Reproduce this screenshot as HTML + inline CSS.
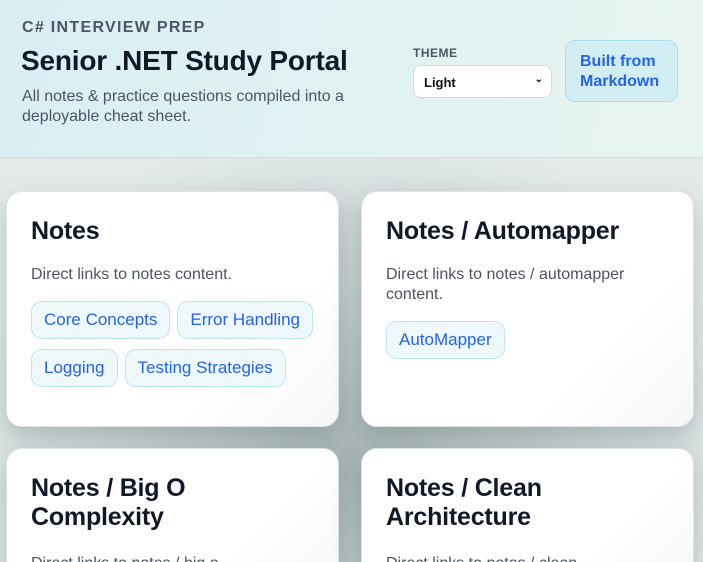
<!DOCTYPE html>
<html><head><style>
*{box-sizing:border-box;margin:0;padding:0}
html,body{width:703px;height:562px;overflow:hidden}
body{font-family:"Liberation Sans",sans-serif;background:#dfe5e5;position:relative}
.hdr{position:absolute;left:0;top:0;width:703px;height:158px;background:linear-gradient(100deg,#d9eff3,#e3f2f1 70%,#e8f4f0);border-bottom:1px solid #cfe0e6}
.kick{position:absolute;left:22px;top:19px;font-size:16px;font-weight:bold;letter-spacing:1.3px;color:#4b5563}
.title{position:absolute;left:21px;top:45px;font-size:28px;font-weight:bold;color:#111827;letter-spacing:-0.2px}
.sub{position:absolute;left:22px;top:87px;font-size:16px;line-height:20px;color:#4b5563;width:360px}
.tl{position:absolute;left:413px;top:46px;font-size:12px;font-weight:bold;color:#4b5563;letter-spacing:.5px}
.sel{position:absolute;left:413px;top:65px;width:139px;height:33px;background:#fff;border:1px solid #d1dde5;border-radius:8px;font-size:13px;font-weight:bold;color:#111;padding:9px 0 0 10px}
.sel span{position:absolute;right:8px;top:8px;font-size:10px}
.btn{position:absolute;left:565px;top:40px;width:113px;height:62px;background:#d3eef2;border:1px solid #a8ddef;border-radius:10px;color:#2563eb;font-weight:bold;font-size:16px;line-height:20px;padding:11px 0 0 14px}
.bg{position:absolute;left:0;top:159px;width:703px;height:403px;background:radial-gradient(ellipse at 50% 75%,#a9b5b6,#c6d0d1 40%,#e4eaea 80%)}
.card{position:absolute;width:333px;background:linear-gradient(135deg,#fff 70%,#f4f6f7);border:1px solid #dde4e8;border-radius:16px;box-shadow:0 10px 25px rgba(80,100,100,.3)}
.card h2{position:absolute;left:24px;top:25px;font-size:25px;font-weight:bold;color:#111827;line-height:29px;letter-spacing:-0.2px}
.card p{position:absolute;left:24px;font-size:16px;line-height:20px;color:#4b5563;width:275px}
.chips{position:absolute;left:24px;width:305px}
.chip{display:inline-block;height:38px;padding:0 12px;line-height:36px;border:1px solid #bde5f4;background:#eef8fd;border-radius:11px;color:#2563eb;font-size:17px;margin:0 7px 10px 0}
</style></head><body>
<div class="hdr">
<div class="kick">C# INTERVIEW PREP</div>
<div class="title">Senior .NET Study Portal</div>
<div class="sub">All notes &amp; practice questions compiled into a deployable cheat sheet.</div>
<div class="tl">THEME</div>
<div class="sel">Light<span>&#8964;</span></div>
<div class="btn">Built from<br>Markdown</div>
</div>
<div class="bg"></div>
<div class="card" style="left:6px;top:191px;height:236px">
<h2>Notes</h2>
<p style="top:73px">Direct links to notes content.</p>
<div class="chips" style="top:109px"><span class="chip">Core Concepts</span><span class="chip">Error Handling</span><br><span class="chip">Logging</span><span class="chip">Testing Strategies</span></div>
</div>
<div class="card" style="left:361px;top:191px;height:236px">
<h2>Notes / Automapper</h2>
<p style="top:73px">Direct links to notes / automapper content.</p>
<div class="chips" style="top:129px"><span class="chip">AutoMapper</span></div>
</div>
<div class="card" style="left:6px;top:448px;height:140px">
<h2>Notes / Big O<br>Complexity</h2>
<p style="top:105px">Direct links to notes / big o</p>
</div>
<div class="card" style="left:361px;top:448px;height:140px">
<h2>Notes / Clean<br>Architecture</h2>
<p style="top:105px">Direct links to notes / clean</p>
</div>
</body></html>
